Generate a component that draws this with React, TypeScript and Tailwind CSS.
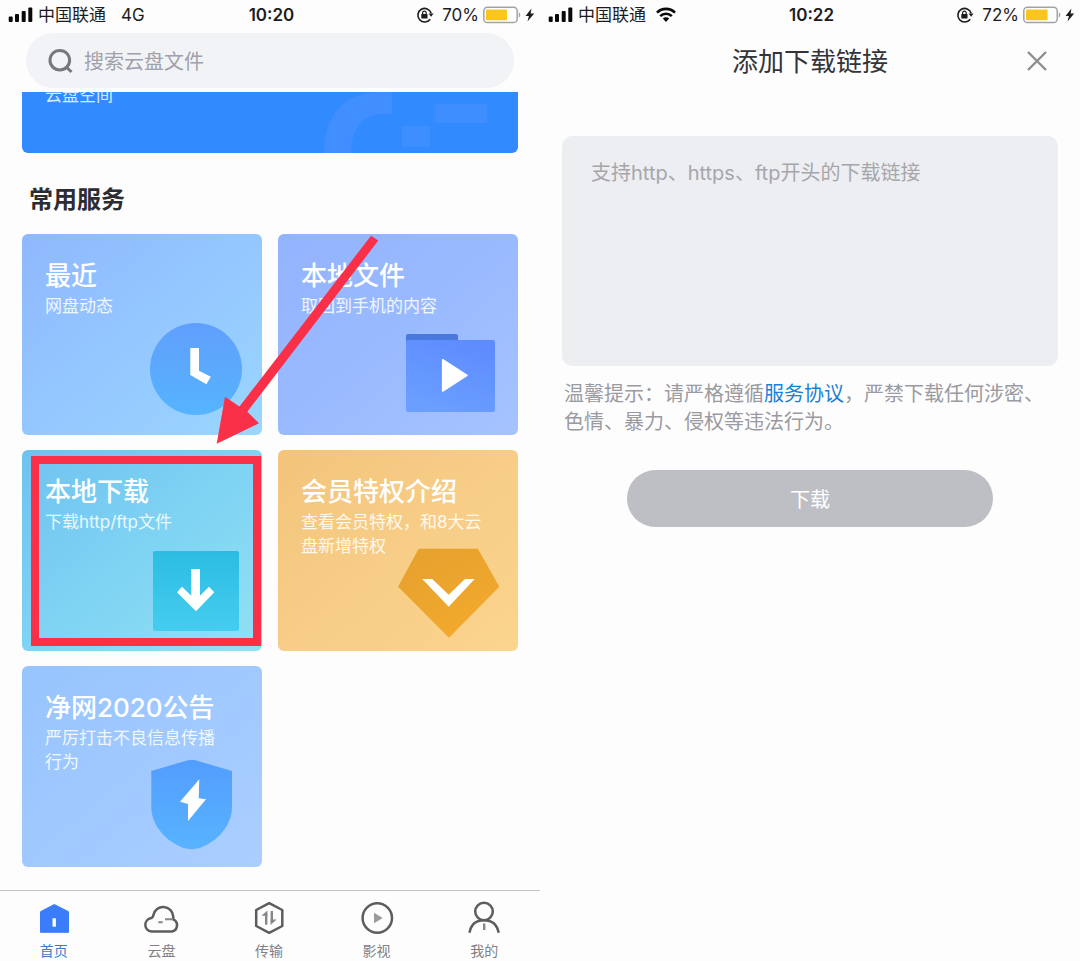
import type { ReactNode } from "react";

type StatusProps = { time: string; level: number; network: ReactNode };

function StatusBar({ time, level, network }: StatusProps) {
  return (
    <div className="grid h-[30px] grid-cols-[1fr_auto_1fr] items-center pr-[5px] pl-2 text-[17px] leading-6 text-[#1c1c1e]">
      <div className="flex items-center gap-[5px]">
        <svg width="25" height="16" viewBox="0 0 25 16" fill="#0a0a0a" aria-hidden="true">
          <rect x="0.7" y="9.5" width="4" height="5.5" rx="1" />
          <rect x="7" y="7" width="4" height="8" rx="1" />
          <rect x="13.7" y="4" width="4" height="11" rx="1" />
          <rect x="20.3" y="0.5" width="4" height="14.5" rx="1" />
        </svg>
        <span>中国联通</span>
        {network}
      </div>
      <span className="font-semibold">{time}</span>
      <div className="flex items-center justify-end gap-1">
        <svg width="18" height="18" viewBox="0 0 18 18" fill="none" stroke="#1c1c1e" strokeWidth="1.6" aria-hidden="true">
          <path d="M14.2 13.2A6.8 6.8 0 1 1 15.2 7.2" />
          <path d="M12.6 7.4h5l-2.5 3.4z" fill="#1c1c1e" stroke="none" />
          <rect x="5.3" y="8" width="6.2" height="4.6" rx="0.6" fill="#1c1c1e" stroke="none" />
          <path d="M6.6 8.2V6.9a1.8 1.8 0 0 1 3.600 0v1.3" strokeWidth="1.2" />
        </svg>
        <span className="ml-1">{level}%</span>
        <svg width="38" height="18" viewBox="0 0 38 18" aria-hidden="true">
          <rect x="0.8" y="1.3" width="33.4" height="15.2" rx="3.6" fill="#fff" stroke="#a3a3a6" strokeWidth="1.5" />
          <rect x="3" y="3.6" width={level * 0.3} height="10.6" rx="1" fill="#fac51c" />
          <path d="M35.8 6.2c2 .8 2 4.6 0 5.4z" fill="#a3a3a6" />
        </svg>
        <svg width="10" height="14" viewBox="0 0 10 14" aria-hidden="true">
          <path d="M6.4.4.6 8h3.3l-1.4 5.6L9.2 5.6H5.6z" fill="#1c1c1e" />
        </svg>
      </div>
    </div>
  );
}

function ClockArt() {
  return (
    <>
      <defs>
        <linearGradient id="clock" x1="0" y1="0" x2="0" y2="1">
          <stop stopColor="#609ffc" />
          <stop offset="1" stopColor="#56b4fe" />
        </linearGradient>
      </defs>
      <circle cx="62" cy="62" r="46" fill="url(#clock)" />
      <path d="M56.3 41H65v22.7l11.8 6L72.400 77.300l-16.100-9.300z" fill="#fff" />
    </>
  );
}

function FolderArt() {
  return (
    <>
      <defs>
        <linearGradient id="folder" x1="0.7" y1="0" x2="0.3" y2="1">
          <stop stopColor="#5d8cfe" />
          <stop offset="1" stopColor="#6b9fff" />
        </linearGradient>
      </defs>
      <path d="M16 36v-7q0-2 2-2h48q2 0 2 2v7z" fill="#4a78dc" />
      <rect x="16" y="33" width="89" height="72" rx="2" fill="url(#folder)" />
      <path d="M52.7 52.7 77 68.3 52.7 84z" fill="#fff" stroke="#fff" strokeWidth="1.6" strokeLinejoin="round" />
    </>
  );
}

function DownloadArt() {
  return (
    <>
      <defs>
        <linearGradient id="download" x1="0" y1="0" x2="0" y2="1">
          <stop stopColor="#2cbce2" />
          <stop offset="1" stopColor="#45cdf0" />
        </linearGradient>
      </defs>
      <rect x="19" y="28" width="86" height="80" rx="2" fill="url(#download)" />
      <path d="M57.3 46H66v26.7l9-9 5.3 5.6L62 88.3 43 69.3l5-5.6 9.3 9z" fill="#fff" />
    </>
  );
}

function DiamondArt() {
  return (
    <>
      <defs>
        <linearGradient id="diamond" x1="0" y1="0" x2="0.6" y2="1">
          <stop stopColor="#e5a02e" />
          <stop offset="1" stopColor="#f2a92c" />
        </linearGradient>
      </defs>
      <path
        d="M29.3 26.8h58l20.8 36.8L59 113.4 9.3 63.6z"
        fill="url(#diamond)"
        stroke="url(#diamond)"
        strokeWidth="2"
        strokeLinejoin="round"
      />
      <path d="M32.3 56h10l16.4 15.7L75 56h9.7l-26 27.7z" fill="#fff" />
    </>
  );
}

function ShieldArt() {
  return (
    <>
      <defs>
        <linearGradient id="shield" x1="0" y1="0" x2="0" y2="1">
          <stop stopColor="#529dfd" />
          <stop offset="1" stopColor="#58b3ff" />
        </linearGradient>
      </defs>
      <path
        d="M54 21.2q3.7-.9 7.4 0L98 32v36c0 21-19 37.5-34.5 41.6q-5.8 1.4-11.6 0C36.3 105.5 17.3 89 17.3 68V32z"
        fill="url(#shield)"
      />
      <path d="M65.3 40.3 46 62.7l8 2.3v17l18-21.7-7.3-1z" fill="#fff" />
    </>
  );
}

type Service = { title: string; note: string; color: string; art: ReactNode; marked?: boolean };

const services: Service[] = [
  { title: "最近", note: "网盘动态", color: "from-[#8fb8fd] via-[#94c7ff] to-[#9ad6ff]", art: <ClockArt /> },
  { title: "本地文件", note: "取回到手机的内容", color: "from-[#92b3fe] via-[#9abaff] to-[#a6c3ff]", art: <FolderArt /> },
  {
    title: "本地下载",
    note: "下载http/ftp文件",
    color: "from-[#6fc2f0] via-[#7fd3f3] to-[#92e1f3]",
    art: <DownloadArt />,
    marked: true,
  },
  {
    title: "会员特权介绍",
    note: "查看会员特权，和8大云盘新增特权",
    color: "from-[#f3c47a] via-[#f7cd87] to-[#fbd48e]",
    art: <DiamondArt />,
  },
  {
    title: "净网2020公告",
    note: "严厉打击不良信息传播行为",
    color: "from-[#97c4fd] via-[#a0c9ff] to-[#abceff]",
    art: <ShieldArt />,
  },
];

function ServiceCard({ title, note, color, art, marked }: Service) {
  return (
    <a href="#" className={`relative grid h-[201px] rounded-md bg-linear-to-br text-white ${color}`}>
      <svg
        className="col-start-1 row-start-1 self-end justify-self-end"
        width="128"
        height="128"
        viewBox="0 0 128 128"
        aria-hidden="true"
      >
        {art}
      </svg>
      <div className="col-start-1 row-start-1 pt-[26px] pr-8 pl-[23px]">
        <h3 className="text-[26px] leading-8 font-medium">{title}</h3>
        <p className="mt-0.5 text-[17px] leading-6 text-white/85">{note}</p>
      </div>
      {marked && <span className="absolute top-[6px] right-px bottom-[5px] left-[9px] border-8 border-[#fa3048]" />}
    </a>
  );
}

const tabs: { label: string; icon: ReactNode }[] = [
  {
    label: "首页",
    icon: (
      <>
        <path d="M6.5 13.7 20.3 6.5 34.5 13.7v20.600h-28z" fill="#3b7cfa" stroke="#3b7cfa" strokeWidth="1" strokeLinejoin="round" />
        <path d="M20.2 20.3v8.400" stroke="#fff" strokeWidth="3.4" />
      </>
    ),
  },
  {
    label: "云盘",
    icon: (
      <>
        <path d="M10.500 33.500a6.700 6.700 0 0 1-1-13.200c1.700-.4 2.600-1.400 2.900-3.200a10 10 0 0 1 19.800 1.200l.2 3a6.500 6.500 0 0 1-1.600 12.200z" />
        <path d="M17.3 24.2h4.400M24 21.3h8" stroke="#87878b" strokeWidth="2" />
      </>
    ),
  },
  {
    label: "传输",
    icon: (
      <>
        <path d="M20.2 5.2 33.3 12v16L20.2 34.8 7.2 28V12z" strokeLinejoin="round" />
        <path d="M17.2 26.8V15.5M22.8 13v11" stroke="#87878b" strokeWidth="2.4" />
        <path d="M12.4 17.8 18.4 12.400v5.400zM21.600 27v-5.400h6z" fill="#87878b" stroke="none" />
      </>
    ),
  },
  {
    label: "影视",
    icon: (
      <>
        <circle cx="20.3" cy="20" r="14.7" />
        <path d="M17 14.7 25.7 20 17 25.3z" fill="#9b9b9f" stroke="none" />
      </>
    ),
  },
  {
    label: "我的",
    icon: (
      <>
        <circle cx="20" cy="13.5" r="8.8" />
        <path d="M5.5 34.7C7 26.5 12.5 22.3 20 22.3s13 4.2 14.7 12.4" />
        <path d="M20.2 25.5v6.5" stroke="#87878b" strokeWidth="2.4" />
      </>
    ),
  },
];

function HomeScreen() {
  return (
    <section className="relative flex flex-col">
      <StatusBar time="10:20" level={70} network={<span className="ml-[10px]">4G</span>} />
      <label className="mx-[26px] mt-[3px] flex h-[55px] items-center gap-[10px] rounded-full bg-[#f2f3f7] pl-[22px]">
        <svg width="26" height="26" viewBox="0 0 26 26" fill="none" stroke="#77787c" strokeWidth="3" aria-hidden="true">
          <circle cx="11.8" cy="12.2" r="9.8" />
          <path d="m18.2 19 5.300 5" />
        </svg>
        <span className="sr-only">搜索</span>
        <input
          type="search"
          placeholder="搜索云盘文件"
          className="min-w-0 flex-1 bg-transparent pt-0.5 text-xl outline-none placeholder:text-[#a0a1aa]"
        />
      </label>
      <main className="mt-1 flex-1 px-[22px]">
        <div className="grid h-[61px] overflow-hidden rounded-b-md bg-[#328aff]">
          <svg className="col-start-1 row-start-1 justify-self-end" width="200" height="61" viewBox="0 0 200 61" aria-hidden="true">
            <path d="M6 61C6 24 26 0 62 0h12v22H66C44 22 33 38 33 61z" fill="#408eff" />
            <rect x="117" y="12" width="52" height="19" fill="#3f8eff" />
            <rect x="84" y="34" width="28" height="21" fill="#3d8fff" />
          </svg>
          <p className="col-start-1 row-start-1 -mt-[9px] pl-[23px] text-[17px] leading-6 text-white/80">云盘空间</p>
        </div>
        <h2 className="mt-[31px] mb-[18px] pl-[7px] text-2xl leading-8 font-bold text-[#2c2c32]">常用服务</h2>
        <div className="grid grid-cols-2 gap-x-4 gap-y-[15px]">
          {services.map((service) => (
            <ServiceCard key={service.title} {...service} />
          ))}
        </div>
      </main>
      <nav className="grid grid-cols-5 border-t border-[#c6c6c9] pr-0.5">
        {tabs.map(({ label, icon }, index) => (
          <a
            key={label}
            href="#"
            className={`flex flex-col items-center gap-[3px] pt-[7px] text-sm ${index === 0 ? "text-[#3d7bcb]" : "text-[#808085]"}`}
          >
            <svg width="40" height="40" viewBox="0 0 40 40" fill="none" stroke="#5d5d61" strokeWidth="2.5" aria-hidden="true">
              {icon}
            </svg>
            {label}
          </a>
        ))}
      </nav>
      <svg
        className="pointer-events-none absolute top-[232px] left-[210px]"
        width="172"
        height="216"
        viewBox="210 232 172 216"
        aria-hidden="true"
      >
        <path d="M371 235.7 378.3 240.5 247.3 411.7 259 423.3 216.7 443.7 225 396.7 239.5 406.5z" fill="#fa3048" />
      </svg>
    </section>
  );
}

function WifiIcon() {
  return (
    <svg className="ml-[5px]" width="20" height="16" viewBox="0 0 20 16" fill="none" stroke="#0a0a0a" strokeWidth="2.6" aria-hidden="true">
      <path d="M1 5.7a12.600 12.600 0 0 1 18 0" />
      <path d="M4.2 9.2a8.200 8.200 0 0 1 11.600 0" />
      <path d="M6.8 11.6 10 15l3.200-3.400a4.600 4.600 0 0 0-6.400 0z" fill="#0a0a0a" stroke="none" />
    </svg>
  );
}

function LinkScreen() {
  return (
    <section className="flex flex-col">
      <StatusBar time="10:22" level={72} network={<WifiIcon />} />
      <header className="mt-[3px] grid h-[55px] grid-cols-[1fr_auto_1fr] items-center px-8">
        <h1 className="col-start-2 pt-0.5 text-[26px] leading-8 text-[#333338]">添加下载链接</h1>
        <button type="button" aria-label="关闭" className="justify-self-end">
          <svg width="22" height="22" viewBox="0 0 22 22" stroke="#8e8e91" strokeWidth="2.4" aria-hidden="true">
            <path d="m2 2 18 18M20 2 2 20" />
          </svg>
        </button>
      </header>
      <form className="mt-12 flex flex-col px-[22px]">
        <textarea
          aria-label="下载链接"
          placeholder="支持http、https、ftp开头的下载链接"
          className="h-[230px] resize-none rounded-[10px] bg-[#edeef2] px-[29px] pt-[23px] text-xl outline-none placeholder:text-[#a6a6aa]"
        />
        <p className="mt-[14px] pl-0.5 text-xl text-[#9a9aa1]">
          温馨提示：请严格遵循
          <a href="#" className="text-[#1a7fd6]">
            服务协议
          </a>
          ，严禁下载任何涉密、色情、暴力、侵权等违法行为。
        </p>
        <button type="button" className="mx-[65px] mt-[34px] h-[57px] rounded-full bg-[#bdbfc4] pt-0.5 text-xl text-white">
          下载
        </button>
      </form>
    </section>
  );
}

export default function App() {
  return (
    <div className="grid min-h-screen grid-cols-2 bg-[#fdfdfd] font-[Inter,'Noto_Sans_CJK_SC',sans-serif]">
      <HomeScreen />
      <LinkScreen />
    </div>
  );
}
